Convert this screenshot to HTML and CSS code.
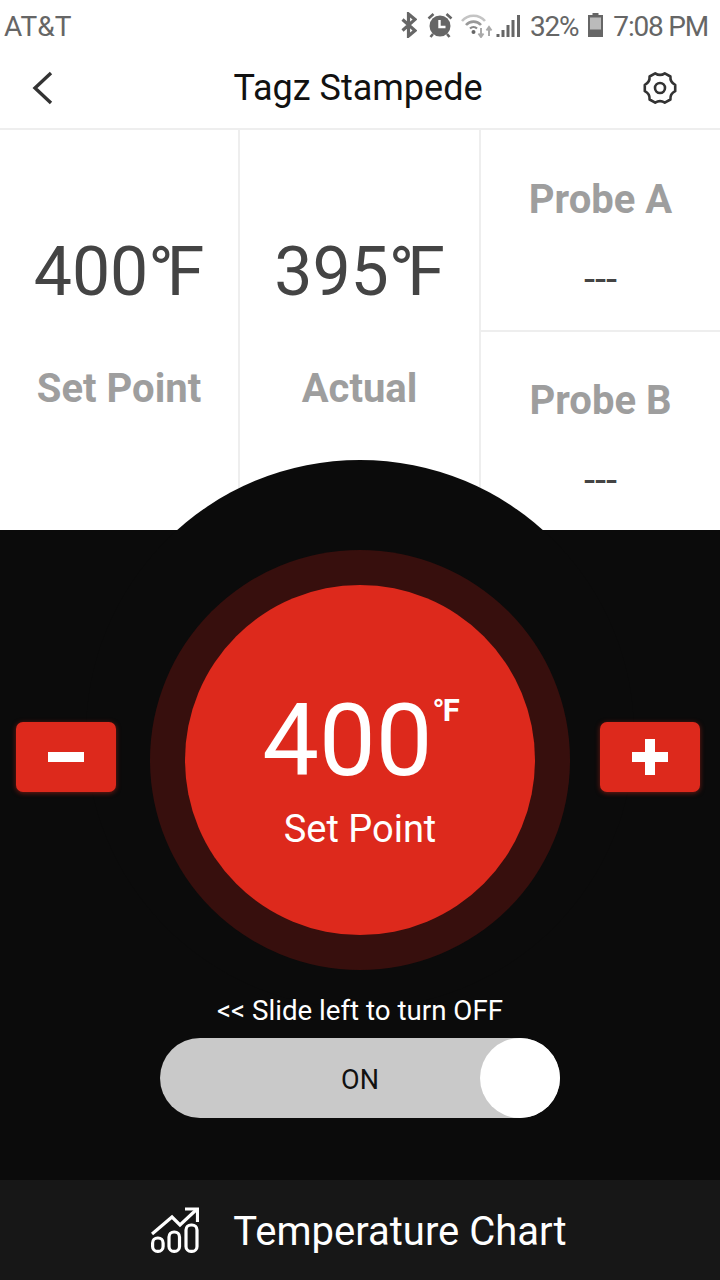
FILE: index.html
```html
<!DOCTYPE html>
<html lang="en">
<head>
    <meta charset="UTF-8">
    <meta name="viewport" content="width=device-width, initial-scale=1.0">
    <title>Tagz Stampede</title>
    <link rel="stylesheet" href="styles.css">
</head>
<body>
    <div class="status-bar">
        <span class="status-carrier">AT&amp;T</span>
        <div class="status-right">
            <svg class="icon-bt" width="16" height="26" viewBox="0 0 16 26">
                <path d="M1.5 7.5 L14 18.5 L7.5 24 V2 L14 7.5 L1.5 18.5" fill="none" stroke="#666" stroke-width="3.2"/>
            </svg>
            <svg class="icon-alarm" width="26" height="26" viewBox="0 0 26 26">
                <circle cx="13" cy="14" r="10.5" fill="#666"/>
                <path d="M12.5 8 V15 H18.5" fill="none" stroke="#fff" stroke-width="2.4"/>
                <path d="M1.5 6.5 L6.5 2 M24.5 6.5 L19.5 2 M6 22 L3.5 25 M20 22 L22.5 25" stroke="#666" stroke-width="2.6"/>
            </svg>
            <svg class="icon-wifi" width="32" height="26" viewBox="0 0 32 26">
                <path d="M1 9 C7 2 18 2 24 9" fill="none" stroke="#c4c4c4" stroke-width="2.6"/>
                <path d="M5 13 C9 8.5 16 8.5 20 13" fill="none" stroke="#999" stroke-width="2.6"/>
                <path d="M9 16.5 C11 14.5 14 14.5 16 16.5" fill="none" stroke="#888" stroke-width="2.2"/>
                <circle cx="12.5" cy="20" r="2" fill="#666"/>
                <path d="M20 16 V25 M17.5 21.5 L20 25 L22.5 21.5" fill="none" stroke="#aaa" stroke-width="2"/>
                <path d="M28 24 V15 M25.5 18.5 L28 15 L30.5 18.5" fill="none" stroke="#aaa" stroke-width="2"/>
            </svg>
            <svg class="icon-signal" width="25" height="26" viewBox="0 0 25 26">
                <path d="M2 22 V25 M7 18 V25 M12 13 V25 M17 8 V25 M22.5 3 V25" stroke="#666" stroke-width="3"/>
            </svg>
            <span class="status-text">32%</span>
            <svg class="icon-battery" width="17" height="26" viewBox="0 0 17 26">
                <path d="M5.5 1 H11.5 V3 H16 V25 H1 V3 H5.5 Z" fill="#666"/>
                <rect x="3" y="5.5" width="11" height="12" fill="#bbb"/>
            </svg>
            <span class="status-text">7:08 PM</span>
        </div>
    </div>

    <header class="app-header">
        <svg width="24" height="36" viewBox="0 0 24 36">
            <path d="M21 3 L5 18 L21 33" fill="none" stroke="#333" stroke-width="3.4"/>
        </svg>
        <h1>Tagz Stampede</h1>
        <svg width="36" height="36" viewBox="0 0 36 36">
            <path d="M22.8 3.3 L28.4 6.5 Q28 12.25 33.2 14.8 L33.2 21.2 Q28 23.75 28.4 29.5 L22.8 32.7 Q18 29.5 13.2 32.7 L7.6 29.5 Q8 23.75 2.8 21.2 L2.8 14.8 Q8 12.25 7.6 6.5 L13.2 3.3 Q18 6.5 22.8 3.3 Z" fill="none" stroke="#333" stroke-width="2.6" stroke-linejoin="round"/>
            <circle cx="18" cy="18" r="5" fill="none" stroke="#333" stroke-width="2.6"/>
        </svg>
    </header>

    <section class="readings">
        <div class="reading">
            <div class="reading-value">400<span class="deg">°</span>F</div>
            <div class="reading-label">Set Point</div>
        </div>
        <div class="reading">
            <div class="reading-value">395<span class="deg">°</span>F</div>
            <div class="reading-label">Actual</div>
        </div>
        <div class="probes">
            <div class="probe">
                <div class="reading-label">Probe A</div>
                <div class="probe-value">---</div>
            </div>
            <div class="probe">
                <div class="reading-label">Probe B</div>
                <div class="probe-value">---</div>
            </div>
        </div>
    </section>

    <main class="control-panel">
        <div class="dome"></div>
        <div class="dial-row">
            <button class="step-btn step-minus" type="button" aria-label="Decrease"><span class="bar-h"></span></button>
            <div class="dial-ring">
                <div class="dial">
                    <div class="dial-temp">400<span class="dial-unit">°F</span></div>
                    <div class="dial-label">Set Point</div>
                </div>
            </div>
            <button class="step-btn step-plus" type="button" aria-label="Increase"><span class="bar-h"></span><span class="bar-v"></span></button>
        </div>
        <p class="slide-hint">&lt;&lt; Slide left to turn OFF</p>
        <div class="slider">
            <span>ON</span>
            <div class="knob"></div>
        </div>
    </main>

    <footer class="chart-bar">
        <svg width="48" height="46" viewBox="0 0 48 46">
            <path d="M1 27 L21 10 L29 18 L45 3" fill="none" stroke="#fff" stroke-width="3.2"/>
            <path d="M34 2 H46.5 V15" fill="none" stroke="#fff" stroke-width="3.2"/>
            <rect x="1.6" y="31" width="10.5" height="13.4" rx="5" fill="none" stroke="#fff" stroke-width="3.2"/>
            <rect x="18" y="25" width="10.5" height="19.4" rx="5" fill="none" stroke="#fff" stroke-width="3.2"/>
            <rect x="35" y="18" width="11" height="26.4" rx="5" fill="none" stroke="#fff" stroke-width="3.2"/>
        </svg>
        <span>Temperature Chart</span>
    </footer>
</body>
</html>
```

FILE: styles.css
```css
* {
    box-sizing: border-box;
}

html, body {
    margin: 0;
    padding: 0;
}

body {
    width: 720px;
    height: 1280px;
    overflow: hidden;
    background-color: #fff;
    font-family: Roboto, "Liberation Sans", sans-serif;
}

.status-bar {
    height: 52px;
    padding: 0 12px 0 4px;
    display: flex;
    align-items: center;
    justify-content: space-between;
    color: #666;
    font-size: 28px;
}

.status-right {
    display: flex;
    align-items: center;
}

.status-right svg {
    margin-bottom: 2px;
}

.icon-bt {
    margin-right: 10px;
}

.icon-alarm {
    margin-right: 8px;
}

.icon-wifi {
    margin-right: 3px;
}

.icon-signal {
    margin-right: 9px;
}

.icon-battery {
    margin-right: 9px;
}

.status-text {
    letter-spacing: -1.2px;
}

.status-right .status-text:nth-of-type(1) {
    margin-right: 9px;
}

.app-header {
    height: 78px;
    padding: 0 42px 4px 30px;
    display: flex;
    align-items: center;
    justify-content: space-between;
    border-bottom: 2px solid #eee;
}

.app-header h1 {
    margin: 0 0 0 20px;
    font-size: 36px;
    font-weight: 400;
    color: #111;
}

.readings {
    height: 400px;
    display: grid;
    grid-template-columns: 240px 241px 239px;
}

.reading {
    padding-top: 102px;
    display: flex;
    flex-direction: column;
    align-items: center;
    gap: 55px;
    border-right: 2px solid #eee;
}

.reading-value {
    font-size: 68px;
    line-height: 80px;
    color: #444;
}

.deg {
    letter-spacing: -7px;
}

.reading-label {
    font-size: 40px;
    line-height: 44px;
    font-weight: 700;
    color: #9e9e9e;
}

.probes {
    display: flex;
    flex-direction: column;
}

.probe {
    flex: 1;
    padding-top: 48px;
    display: flex;
    flex-direction: column;
    align-items: center;
    gap: 40px;
}

.probe + .probe {
    padding-top: 47px;
    border-top: 2px solid #eee;
}

.probe-value {
    font-size: 40px;
    line-height: 36px;
    color: #444;
}

.control-panel {
    position: relative;
    height: 650px;
    padding-top: 20px;
    background-color: #0b0b0b;
}

.dome {
    position: absolute;
    left: 86px;
    top: -70px;
    width: 548px;
    height: 548px;
    border-radius: 50%;
    background-color: #0b0b0b;
}

.dial-row {
    position: relative;
    display: grid;
    grid-template-columns: 150px 420px 150px;
    align-items: center;
}

.step-btn {
    position: relative;
    width: 100px;
    height: 70px;
    margin-bottom: 6px;
    padding: 0;
    border: none;
    border-radius: 7px;
    background-color: #dd291c;
    box-shadow: 0 1px 5px rgba(221, 41, 28, 0.5);
}

.step-minus {
    justify-self: start;
    margin-left: 16px;
}

.step-plus {
    justify-self: end;
    margin-right: 20px;
}

.bar-h,
.bar-v {
    position: absolute;
    left: 50%;
    top: 50%;
    background-color: #fff;
    transform: translate(-50%, -50%);
}

.bar-h {
    width: 36px;
    height: 10px;
}

.bar-v {
    width: 10px;
    height: 36px;
}

.dial-ring {
    width: 420px;
    height: 420px;
    border-radius: 50%;
    background-color: #370f0d;
    display: flex;
    align-items: center;
    justify-content: center;
}

.dial {
    width: 350px;
    height: 350px;
    border-radius: 50%;
    background-color: #dd291c;
    color: #fff;
    text-align: center;
    padding-top: 102px;
}

.dial-temp {
    display: flex;
    justify-content: center;
    font-size: 101px;
    line-height: 108px;
}

.dial-unit {
    margin-top: 6px;
    font-size: 31px;
    line-height: 36px;
    font-weight: 700;
    letter-spacing: -2px;
}

.dial-label {
    margin-top: 12px;
    font-size: 38px;
    line-height: 44px;
}

.slide-hint {
    position: relative;
    margin: 26px 0 12px;
    text-align: center;
    color: #fff;
    font-size: 27.7px;
    line-height: 30px;
}

.slider {
    position: relative;
    width: 400px;
    height: 80px;
    margin: 0 auto;
    padding-top: 3px;
    border-radius: 40px;
    background-color: #c9c9c9;
    display: flex;
    align-items: center;
    justify-content: center;
    font-size: 27px;
    color: #111;
}

.knob {
    position: absolute;
    right: 0;
    top: 0;
    width: 80px;
    height: 80px;
    border-radius: 50%;
    background-color: #fff;
}

.chart-bar {
    height: 100px;
    padding: 3px 2px 0 0;
    background-color: #171717;
    display: flex;
    align-items: center;
    justify-content: center;
    gap: 34px;
    color: #fff;
    font-size: 40px;
}

.chart-bar svg {
    margin-top: -3px;
}
```
